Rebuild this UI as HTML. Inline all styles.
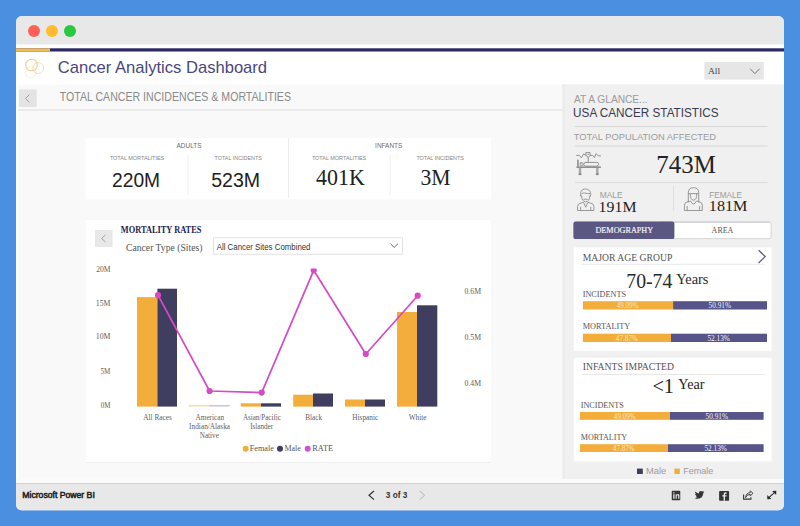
<!DOCTYPE html>
<html><head><meta charset="utf-8">
<style>
*{margin:0;padding:0}
html,body{width:800px;height:526px;overflow:hidden;background:#4a8fe0}
svg{display:block}
.n{font-family:"Liberation Sans",sans-serif}
.s{font-family:"Liberation Serif",serif}
</style></head><body>
<svg width="800" height="526" viewBox="0 0 800 526">
<rect x="0" y="0" width="800" height="526" fill="#4a8fe0"/>
<clipPath id="win"><rect x="16" y="16" width="768" height="494.5" rx="6" ry="6"/></clipPath>
<g clip-path="url(#win)">
<rect x="16" y="16" width="768" height="494.5" fill="#ffffff"/>
<rect x="16" y="16" width="768" height="28.5" fill="#e8e8e8"/>
<rect x="16" y="48.3" width="768" height="3.2" fill="#2b2864"/>
<rect x="16" y="48.3" width="34" height="3.2" fill="#f0bd5a"/>
<rect x="18" y="84.4" width="544.5" height="395" fill="#f9f9f9"/>
<rect x="18" y="109.5" width="544.5" height="1" fill="#dedede"/>
<rect x="562.4" y="84.4" width="222" height="395" fill="#f0f0f0"/><rect x="562.4" y="84.4" width="3" height="395" fill="#ececec"/>
<rect x="16" y="479" width="768" height="4" fill="#fbfbfb"/>
<rect x="16" y="483" width="768" height="1" fill="#d0d0d0"/>
<rect x="16" y="484" width="768" height="26.5" fill="#e8e8e8"/>
</g>
<circle cx="34" cy="31" r="6" fill="#fe5f57"/><circle cx="52" cy="31" r="6" fill="#febc2e"/><circle cx="70" cy="31" r="6" fill="#28c840"/>
<circle cx="30.6" cy="72" r="5.5" fill="none" stroke="#f7ead0" stroke-width="0.8"/>
<circle cx="38.2" cy="68.1" r="5.5" fill="none" stroke="#f1dcaa" stroke-width="0.9"/>
<circle cx="31.5" cy="65" r="5.8" fill="none" stroke="#edcf8c" stroke-width="1.1"/>
<text x="57.86" y="73.00" font-size="17.01" class="n" fill="#4a477c" textLength="209.20" lengthAdjust="spacingAndGlyphs">Cancer Analytics Dashboard</text>
<rect x="704.4" y="62" width="59.4" height="17.6" fill="#e6e6e6"/>
<text x="707.91" y="74.00" font-size="9.16" class="s" fill="#444" textLength="12.29" lengthAdjust="spacingAndGlyphs">All</text>
<path d="M750.2 68.8 L754.9 73.6 L759.6 68.8" fill="none" stroke="#666" stroke-width="0.9"/>
<rect x="19" y="89.5" width="17.7" height="17.5" fill="#e4e4e4"/>
<path d="M29.5 94.5 L25.5 98.5 L29.5 102.5" fill="none" stroke="#9a9a9a" stroke-width="0.9"/>
<text x="59.76" y="101.25" font-size="11.85" class="n" fill="#8a8a8a" textLength="231.22" lengthAdjust="spacingAndGlyphs">TOTAL CANCER INCIDENCES &amp; MORTALITIES</text>
<rect x="85.5" y="138" width="405.5" height="61.3" fill="#ffffff"/>
<rect x="288" y="138" width="1" height="60" fill="#ececec"/>
<rect x="187.5" y="155" width="0.8" height="40" fill="#ececec"/>
<rect x="389.8" y="155" width="0.8" height="40" fill="#ececec"/>
<text x="176.59" y="148.00" font-size="6.98" class="n" fill="#6a6a6a" textLength="24.90" lengthAdjust="spacingAndGlyphs">ADULTS</text>
<text x="109.88" y="159.60" font-size="5.96" class="n" fill="#858585" textLength="54.37" lengthAdjust="spacingAndGlyphs">TOTAL MORTALITIES</text>
<text x="214.58" y="159.60" font-size="5.96" class="n" fill="#858585" textLength="47.26" lengthAdjust="spacingAndGlyphs">TOTAL INCIDENTS</text>
<text x="112.03" y="187.00" font-size="20.35" class="n" fill="#222" textLength="48.04" lengthAdjust="spacingAndGlyphs">220M</text>
<text x="211.22" y="187.00" font-size="20.35" class="n" fill="#222" textLength="48.89" lengthAdjust="spacingAndGlyphs">523M</text>
<text x="375.11" y="148.00" font-size="6.98" class="n" fill="#6a6a6a" textLength="27.18" lengthAdjust="spacingAndGlyphs">INFANTS</text>
<text x="311.88" y="159.60" font-size="5.96" class="n" fill="#858585" textLength="54.37" lengthAdjust="spacingAndGlyphs">TOTAL MORTALITIES</text>
<text x="416.38" y="159.60" font-size="5.96" class="n" fill="#858585" textLength="47.57" lengthAdjust="spacingAndGlyphs">TOTAL INCIDENTS</text>
<text x="316.07" y="185.00" font-size="22.90" class="s" fill="#222" textLength="48.75" lengthAdjust="spacingAndGlyphs">401K</text>
<text x="420.56" y="185.00" font-size="22.90" class="s" fill="#222" textLength="30.07" lengthAdjust="spacingAndGlyphs">3M</text>
<rect x="85.6" y="220" width="405.3" height="242.6" fill="#ffffff"/><rect x="85.6" y="462" width="405.3" height="0.8" fill="#ededed"/>
<rect x="95" y="230" width="17.6" height="17" fill="#e8e8e8"/>
<path d="M105.5 235 L101.5 238.5 L105.5 242" fill="none" stroke="#9a9a9a" stroke-width="0.9"/>
<text x="120.86" y="233.40" font-size="9.77" font-weight="bold" class="s" fill="#1f1c4f" textLength="80.49" lengthAdjust="spacingAndGlyphs">MORTALITY RATES</text>
<text x="126.01" y="251.00" font-size="10.08" class="s" fill="#555" textLength="76.41" lengthAdjust="spacingAndGlyphs">Cancer Type (Sites)</text>
<rect x="213.5" y="237.75" width="189" height="16.5" fill="#fff" stroke="#e2e2e2" stroke-width="1"/>
<text x="216.73" y="249.60" font-size="8.72" class="n" fill="#333" textLength="93.77" lengthAdjust="spacingAndGlyphs">All Cancer Sites Combined</text>
<path d="M390.5 243.8 L394.2 247.4 L397.9 243.8" fill="none" stroke="#555" stroke-width="0.9"/>
<text x="96.17" y="271.80" font-size="8.40" class="s" fill="#5e5e5e" textLength="14.25" lengthAdjust="spacingAndGlyphs">20M</text>
<text x="95.82" y="305.60" font-size="8.40" class="s" fill="#5e5e5e" textLength="14.61" lengthAdjust="spacingAndGlyphs">15M</text>
<text x="95.82" y="339.40" font-size="8.40" class="s" fill="#5e5e5e" textLength="14.61" lengthAdjust="spacingAndGlyphs">10M</text>
<text x="100.59" y="374.00" font-size="8.40" class="s" fill="#5e5e5e" textLength="9.82" lengthAdjust="spacingAndGlyphs">5M</text>
<text x="100.73" y="408.00" font-size="8.40" class="s" fill="#5e5e5e" textLength="9.67" lengthAdjust="spacingAndGlyphs">0M</text>
<text x="464.51" y="293.70" font-size="8.40" class="s" fill="#5e5e5e" textLength="16.52" lengthAdjust="spacingAndGlyphs">0.6M</text>
<text x="464.51" y="339.60" font-size="8.40" class="s" fill="#5e5e5e" textLength="16.52" lengthAdjust="spacingAndGlyphs">0.5M</text>
<text x="464.51" y="385.50" font-size="8.40" class="s" fill="#5e5e5e" textLength="16.52" lengthAdjust="spacingAndGlyphs">0.4M</text>
<rect x="137" y="297.1" width="20.40" height="109.50" fill="#f2ad3b"/>
<rect x="157.4" y="288.7" width="19.60" height="117.90" fill="#3f3d60"/>
<rect x="188.7" y="404.9" width="20.10" height="1.70" fill="#f6dfae"/>
<rect x="208.8" y="404.9" width="20.90" height="1.70" fill="#cbcbd4"/>
<rect x="240.8" y="403.3" width="20.20" height="3.30" fill="#f2ad3b"/>
<rect x="261" y="403.3" width="20.00" height="3.30" fill="#3f3d60"/>
<rect x="293.2" y="394.7" width="19.80" height="11.90" fill="#f2ad3b"/>
<rect x="313" y="393.5" width="20.00" height="13.10" fill="#3f3d60"/>
<rect x="345" y="399.5" width="20.00" height="7.10" fill="#f2ad3b"/>
<rect x="365" y="399.5" width="20.00" height="7.10" fill="#3f3d60"/>
<rect x="397" y="312" width="20.00" height="94.60" fill="#f2ad3b"/>
<rect x="417" y="305.3" width="20.30" height="101.30" fill="#3f3d60"/>
<clipPath id="plot"><rect x="86" y="268.6" width="405" height="150"/></clipPath><g clip-path="url(#plot)">
<polyline points="158,295.2 209.6,391 261.7,392.6 313.7,270.3 365.8,354 417.7,295.7" fill="none" stroke="#d64ac6" stroke-width="1.7" stroke-linejoin="round"/>
<circle cx="158" cy="295.2" r="3.1" fill="#d64ac6"/>
<circle cx="209.6" cy="391" r="3.1" fill="#d64ac6"/>
<circle cx="261.7" cy="392.6" r="3.1" fill="#d64ac6"/>
<circle cx="313.7" cy="270.3" r="3.1" fill="#d64ac6"/>
<circle cx="365.8" cy="354" r="3.1" fill="#d64ac6"/>
<circle cx="417.7" cy="295.7" r="3.1" fill="#d64ac6"/>
</g>
<text x="143.33" y="420.40" font-size="7.18" class="s" fill="#606060" textLength="28.53" lengthAdjust="spacingAndGlyphs">All Races</text>
<text x="195.53" y="420.40" font-size="7.18" class="s" fill="#606060" textLength="28.58" lengthAdjust="spacingAndGlyphs">American</text>
<text x="189.14" y="429.00" font-size="7.18" class="s" fill="#606060" textLength="40.96" lengthAdjust="spacingAndGlyphs">Indian/Alaska</text>
<text x="199.79" y="438.00" font-size="7.18" class="s" fill="#606060" textLength="19.05" lengthAdjust="spacingAndGlyphs">Native</text>
<text x="242.93" y="420.40" font-size="7.18" class="s" fill="#606060" textLength="37.89" lengthAdjust="spacingAndGlyphs">Asian/Pacific</text>
<text x="250.14" y="429.00" font-size="7.18" class="s" fill="#606060" textLength="22.92" lengthAdjust="spacingAndGlyphs">Islander</text>
<text x="305.29" y="420.40" font-size="7.18" class="s" fill="#606060" textLength="16.71" lengthAdjust="spacingAndGlyphs">Black</text>
<text x="352.29" y="420.40" font-size="7.18" class="s" fill="#606060" textLength="25.93" lengthAdjust="spacingAndGlyphs">Hispanic</text>
<text x="408.74" y="420.40" font-size="7.18" class="s" fill="#606060" textLength="17.76" lengthAdjust="spacingAndGlyphs">White</text>
<circle cx="245.7" cy="448.7" r="3" fill="#f2ad3b"/><circle cx="280" cy="448.7" r="3" fill="#3f3d60"/><circle cx="307.7" cy="448.7" r="3" fill="#d653c7"/>
<text x="249.76" y="451.00" font-size="8.09" class="s" fill="#555" textLength="24.02" lengthAdjust="spacingAndGlyphs">Female</text>
<text x="284.47" y="451.00" font-size="8.09" class="s" fill="#555" textLength="16.30" lengthAdjust="spacingAndGlyphs">Male</text>
<text x="312.27" y="451.00" font-size="8.09" class="s" fill="#555" textLength="20.83" lengthAdjust="spacingAndGlyphs">RATE</text>
<text x="573.98" y="102.50" font-size="10.90" class="n" fill="#9b9b9b" textLength="73.62" lengthAdjust="spacingAndGlyphs">AT A GLANCE...</text>
<text x="573.11" y="117.00" font-size="13.66" class="n" fill="#3b3a4e" textLength="145.42" lengthAdjust="spacingAndGlyphs">USA CANCER STATISTICS</text>
<rect x="575" y="126" width="192.5" height="1" fill="#d8d8d8"/>
<text x="573.79" y="139.60" font-size="9.59" class="n" fill="#9b9b9b" textLength="142.25" lengthAdjust="spacingAndGlyphs">TOTAL POPULATION AFFECTED</text>
<rect x="575" y="145.5" width="192.5" height="1" fill="#d8d8d8"/>
<text x="656.36" y="173.00" font-size="25.19" class="s" fill="#222" textLength="59.37" lengthAdjust="spacingAndGlyphs">743M</text>
<rect x="575" y="182" width="192.5" height="1" fill="#dcdcdc"/>
<rect x="673.2" y="185.6" width="0.8" height="25.4" fill="#dcdcdc"/>
<text x="599.71" y="197.90" font-size="8.14" class="n" fill="#9b9b9b" textLength="22.95" lengthAdjust="spacingAndGlyphs">MALE</text>
<text x="598.61" y="212.20" font-size="14.05" class="s" fill="#222" textLength="37.86" lengthAdjust="spacingAndGlyphs">191M</text>
<text x="709.33" y="197.50" font-size="8.14" class="n" fill="#9b9b9b" textLength="32.52" lengthAdjust="spacingAndGlyphs">FEMALE</text>
<text x="708.83" y="210.60" font-size="15.27" class="s" fill="#222" textLength="38.65" lengthAdjust="spacingAndGlyphs">181M</text>
<g transform="translate(572,148)" fill="none" stroke="#909090" stroke-width="1" stroke-linejoin="round" stroke-linecap="round">
 <path d="M4.6 7.4 L7.4 7.3 L9.4 9.9 L11.6 5.8 L13.9 7.4"/>
 <path d="M18.4 7.4 L20.6 7.3 L22.4 9.6 L24.2 5.6 L26.2 7.8 L28.6 7.9"/>
 <path d="M14.2 4.6 H18.1 V7.6 L16.15 9.4 L14.2 7.6 Z"/>
 <circle cx="16.15" cy="6.4" r="0.7" fill="#909090" stroke="none"/>
 <path d="M16.15 9.4 V14.2"/>
 <rect x="5" y="11.6" width="1.8" height="7.6" fill="#9a9a9a" stroke="none"/>
 <rect x="8.2" y="14.8" width="2.8" height="2.9" rx="0.6"/>
 <rect x="11.8" y="14.4" width="14.8" height="3.8" rx="1.9"/>
 <rect x="4.5" y="18.4" width="24.4" height="1.6" fill="#909090" stroke="none"/>
 <rect x="6.8" y="20" width="2.4" height="5.6" fill="#a8a8a8" stroke="none"/>
 <rect x="24.1" y="20" width="2.4" height="5.6" fill="#a8a8a8" stroke="none"/>
 <ellipse cx="8" cy="26.1" rx="1.6" ry="1.2" fill="#8a8a8a" stroke="none"/>
 <ellipse cx="25.3" cy="26.1" rx="1.6" ry="1.2" fill="#8a8a8a" stroke="none"/>
</g>
<g transform="translate(574,186)" fill="none" stroke="#8f8f8f" stroke-width="0.9" stroke-linejoin="round">
 <path d="M6.8 10.5 C5.8 6 7.5 3 11.5 3 C15.5 3 17.3 6 16.5 10.5"/>
 <path d="M7.4 8 Q9.5 6.2 11.8 7.2 Q14 8.2 16 7.4"/>
 <path d="M7.6 9.5 Q7.6 15.5 11.7 15.8 Q15.8 15.5 15.8 9.5"/>
 <path d="M9.6 13.5 Q11.7 12.5 13.8 13.5"/>
 <path d="M3.5 24.5 V20.5 Q3.5 17.6 7 17 L9.6 16.4 L11.7 21.2 L13.8 16.4 L16.4 17 Q19.9 17.6 19.9 20.5 V24.5 Z"/>
 <path d="M6.6 20.8 V24.5 M16.8 20.8 V24.5"/>
</g>
<g transform="translate(680,185)" fill="none" stroke="#8f8f8f" stroke-width="0.9" stroke-linejoin="round">
 <path d="M8.3 17.5 V7.8 Q8.3 2.7 13.5 2.7 Q18.7 2.7 18.7 7.8 V17.5"/>
 <path d="M8.3 8.6 H18.7"/>
 <path d="M10.3 9 Q10.2 15 13.5 15.2 Q16.8 15 16.7 9"/>
 <path d="M4.5 25.5 V20.2 Q4.5 17.2 8 16.6 L10.6 16.1 Q13.5 22 16.4 16.1 L19 16.6 Q22.3 17.2 22.3 20.2 V25.5 Z"/>
 <path d="M7.2 21 V25.5 M19.6 21 V25.5"/>
</g>

<rect x="573.9" y="222.1" width="197.2" height="16.5" rx="2" fill="#fff" stroke="#d6d6d6" stroke-width="1"/>
<rect x="660" y="221.6" width="110" height="1" fill="#c9c9d2"/>
<rect x="573.4" y="221.6" width="101" height="17.5" rx="2.2" fill="#5a5783"/>
<text x="595.46" y="233.00" font-size="8.85" class="s" fill="#f4f4f8" textLength="57.74" lengthAdjust="spacingAndGlyphs" stroke="#f4f4f8" stroke-width="0.2">DEMOGRAPHY</text>
<text x="711.62" y="232.80" font-size="9.16" class="s" fill="#555" textLength="21.74" lengthAdjust="spacingAndGlyphs">AREA</text>
<rect x="573.8" y="247.4" width="197.8" height="104.3" fill="#fff"/><rect x="573.8" y="350.9" width="197.8" height="0.8" fill="#ededed"/>
<text x="582.72" y="261.00" font-size="11.15" class="s" fill="#555" textLength="89.66" lengthAdjust="spacingAndGlyphs">MAJOR AGE GROUP</text>
<path d="M758.6 250.2 L765.2 256.6 L758.6 263" fill="none" stroke="#56547f" stroke-width="1.2"/>
<rect x="581.6" y="263.8" width="183.1" height="0.8" fill="#e3e3e3"/>
<text x="626.30" y="287.60" font-size="21.07" class="s" fill="#2a2a2a" textLength="46.01" lengthAdjust="spacingAndGlyphs">70-74</text>
<text x="676.24" y="284.00" font-size="14.20" class="s" fill="#2a2a2a" textLength="32.26" lengthAdjust="spacingAndGlyphs">Years</text>
<text x="582.70" y="296.80" font-size="8.24" class="s" fill="#555" textLength="43.31" lengthAdjust="spacingAndGlyphs">INCIDENTS</text>
<text x="582.77" y="328.70" font-size="7.79" class="s" fill="#555" textLength="47.44" lengthAdjust="spacingAndGlyphs">MORTALITY</text>
<rect x="582.9" y="301.2" width="90.20" height="8.30" fill="#f2ad3b"/>
<rect x="673.1" y="301.2" width="93.90" height="8.30" fill="#57548a"/>
<text x="616.66" y="308.20" font-size="8.09" class="s" fill="#fce9c4" textLength="21.78" lengthAdjust="spacingAndGlyphs">49.09%</text>
<text x="708.58" y="308.20" font-size="8.09" class="s" fill="#f4f4fa" textLength="22.47" lengthAdjust="spacingAndGlyphs">50.91%</text>
<rect x="582.9" y="333.7" width="88.10" height="8.30" fill="#f2ad3b"/>
<rect x="671" y="333.7" width="96.00" height="8.30" fill="#57548a"/>
<text x="615.86" y="340.70" font-size="8.09" class="s" fill="#fce9c4" textLength="21.88" lengthAdjust="spacingAndGlyphs">47.87%</text>
<text x="707.38" y="340.70" font-size="8.09" class="s" fill="#f4f4fa" textLength="22.47" lengthAdjust="spacingAndGlyphs">52.13%</text>
<rect x="573.8" y="357.8" width="197.8" height="104.5" fill="#fff"/><rect x="573.8" y="461.5" width="197.8" height="0.8" fill="#ededed"/>
<text x="582.66" y="370.30" font-size="10.08" class="s" fill="#555" textLength="91.33" lengthAdjust="spacingAndGlyphs">INFANTS IMPACTED</text>
<rect x="581.6" y="374.2" width="183.1" height="0.8" fill="#e3e3e3"/>
<text x="652.39" y="393.30" font-size="21.07" class="s" fill="#222" textLength="21.52" lengthAdjust="spacingAndGlyphs">&lt;1</text>
<text x="678.35" y="389.00" font-size="14.50" class="s" fill="#222" textLength="26.07" lengthAdjust="spacingAndGlyphs">Year</text>
<text x="580.70" y="407.70" font-size="7.94" class="s" fill="#555" textLength="43.10" lengthAdjust="spacingAndGlyphs">INCIDENTS</text>
<text x="580.77" y="440.00" font-size="8.09" class="s" fill="#555" textLength="46.43" lengthAdjust="spacingAndGlyphs">MORTALITY</text>
<rect x="580" y="412" width="90.00" height="7.80" fill="#f2ad3b"/>
<rect x="670" y="412" width="93.60" height="7.80" fill="#57548a"/>
<text x="613.86" y="418.50" font-size="8.09" class="s" fill="#fce9c4" textLength="21.78" lengthAdjust="spacingAndGlyphs">49.09%</text>
<text x="705.58" y="418.50" font-size="8.09" class="s" fill="#f4f4fa" textLength="22.47" lengthAdjust="spacingAndGlyphs">50.91%</text>
<rect x="580" y="444.2" width="88.00" height="7.80" fill="#f2ad3b"/>
<rect x="668" y="444.2" width="95.60" height="7.80" fill="#57548a"/>
<text x="612.86" y="450.70" font-size="8.09" class="s" fill="#fce9c4" textLength="21.88" lengthAdjust="spacingAndGlyphs">47.87%</text>
<text x="704.38" y="450.70" font-size="8.09" class="s" fill="#f4f4fa" textLength="22.47" lengthAdjust="spacingAndGlyphs">52.13%</text>
<rect x="637" y="468.6" width="5.8" height="5.4" fill="#3f3d60"/>
<text x="646.04" y="474.40" font-size="9.59" class="n" fill="#9b9b9b" textLength="20.18" lengthAdjust="spacingAndGlyphs">Male</text>
<rect x="674.4" y="468.6" width="5.4" height="5.4" fill="#f2ad3b"/>
<text x="683.26" y="474.40" font-size="9.59" class="n" fill="#9b9b9b" textLength="30.14" lengthAdjust="spacingAndGlyphs">Female</text>
<text x="22.29" y="498.00" font-size="8.43" class="n" fill="#1e1e1e" textLength="72.51" lengthAdjust="spacingAndGlyphs" stroke="#1e1e1e" stroke-width="0.5">Microsoft Power BI</text>
<path d="M374 491 L369 495.3 L374 499.6" fill="none" stroke="#333" stroke-width="1.2"/>
<text x="385.81" y="498.00" font-size="8.72" font-weight="bold" class="n" fill="#333" textLength="21.49" lengthAdjust="spacingAndGlyphs">3 of 3</text>
<path d="M419.8 491 L424.6 495.3 L419.8 499.6" fill="none" stroke="#c4c4c4" stroke-width="1.1"/>
<g>
 <rect x="671.75" y="490.8" width="8.5" height="9.4" rx="0.8" fill="#353535"/>
 <rect x="673.2" y="494.2" width="1.3" height="4.6" fill="#e8e8e8"/>
 <rect x="673.2" y="492.3" width="1.3" height="1.2" fill="#e8e8e8"/>
 <path d="M675.6 498.8 V494.2 H676.8 V494.9 Q677.4 494.1 678.3 494.1 Q679.4 494.1 679.4 495.6 V498.8 H678.2 V496 Q678.2 495.2 677.6 495.2 Q676.8 495.2 676.8 496.2 V498.8 Z" fill="#e8e8e8"/>
 <path d="M704.3 491.9 Q703.6 492.2 703 492.3 Q703.7 491.8 703.9 491.1 Q703.2 491.5 702.5 491.6 Q701.8 490.9 700.8 490.9 Q698.9 491 698.9 493 L698.9 493.4 Q696.7 493.3 695.3 491.5 Q694.6 492.9 696 494 Q695.5 494 695.1 493.8 Q695.1 495.3 696.6 495.7 Q696.2 495.9 695.7 495.8 Q696.2 497 697.5 497.1 Q696.3 498.1 694.7 497.9 Q696.1 498.8 697.7 498.8 Q703 498.8 703.3 493.1 Q703.9 492.6 704.3 491.9 Z" fill="#353535"/>
 <rect x="719.1" y="491" width="10" height="9.7" rx="0.8" fill="#353535"/>
 <path d="M725 500.7 V496.6 H726.4 L726.6 495.2 H725 V494.3 Q725 493.7 725.7 493.7 H726.6 V492.4 Q726.1 492.3 725.4 492.3 Q723.6 492.3 723.6 494.2 V495.2 H722.3 V496.6 H723.6 V500.7 Z" fill="#e8e8e8"/>
 <path d="M743.6 494.6 V499.1 H750.9 V497.3" fill="none" stroke="#353535" stroke-width="1.1"/>
 <path d="M745.6 497.6 Q746.3 494.6 750.2 494.3 V495.9 L753 493.3 L750.2 490.9 V492.6 Q745.8 493.2 745.6 497.6 Z" fill="none" stroke="#353535" stroke-width="0.9" stroke-linejoin="round"/>
 <path d="M768.3 498.1 L775.2 491.8" fill="none" stroke="#2a2a2a" stroke-width="1.1"/>
 <path d="M772.2 490.9 L776.3 490.8 L776.2 494.9 Z" fill="#2a2a2a"/>
 <path d="M767.2 495.1 L767.3 499.2 L771.4 499.1 Z" fill="#2a2a2a"/>
</g>

</svg>
</body></html>
